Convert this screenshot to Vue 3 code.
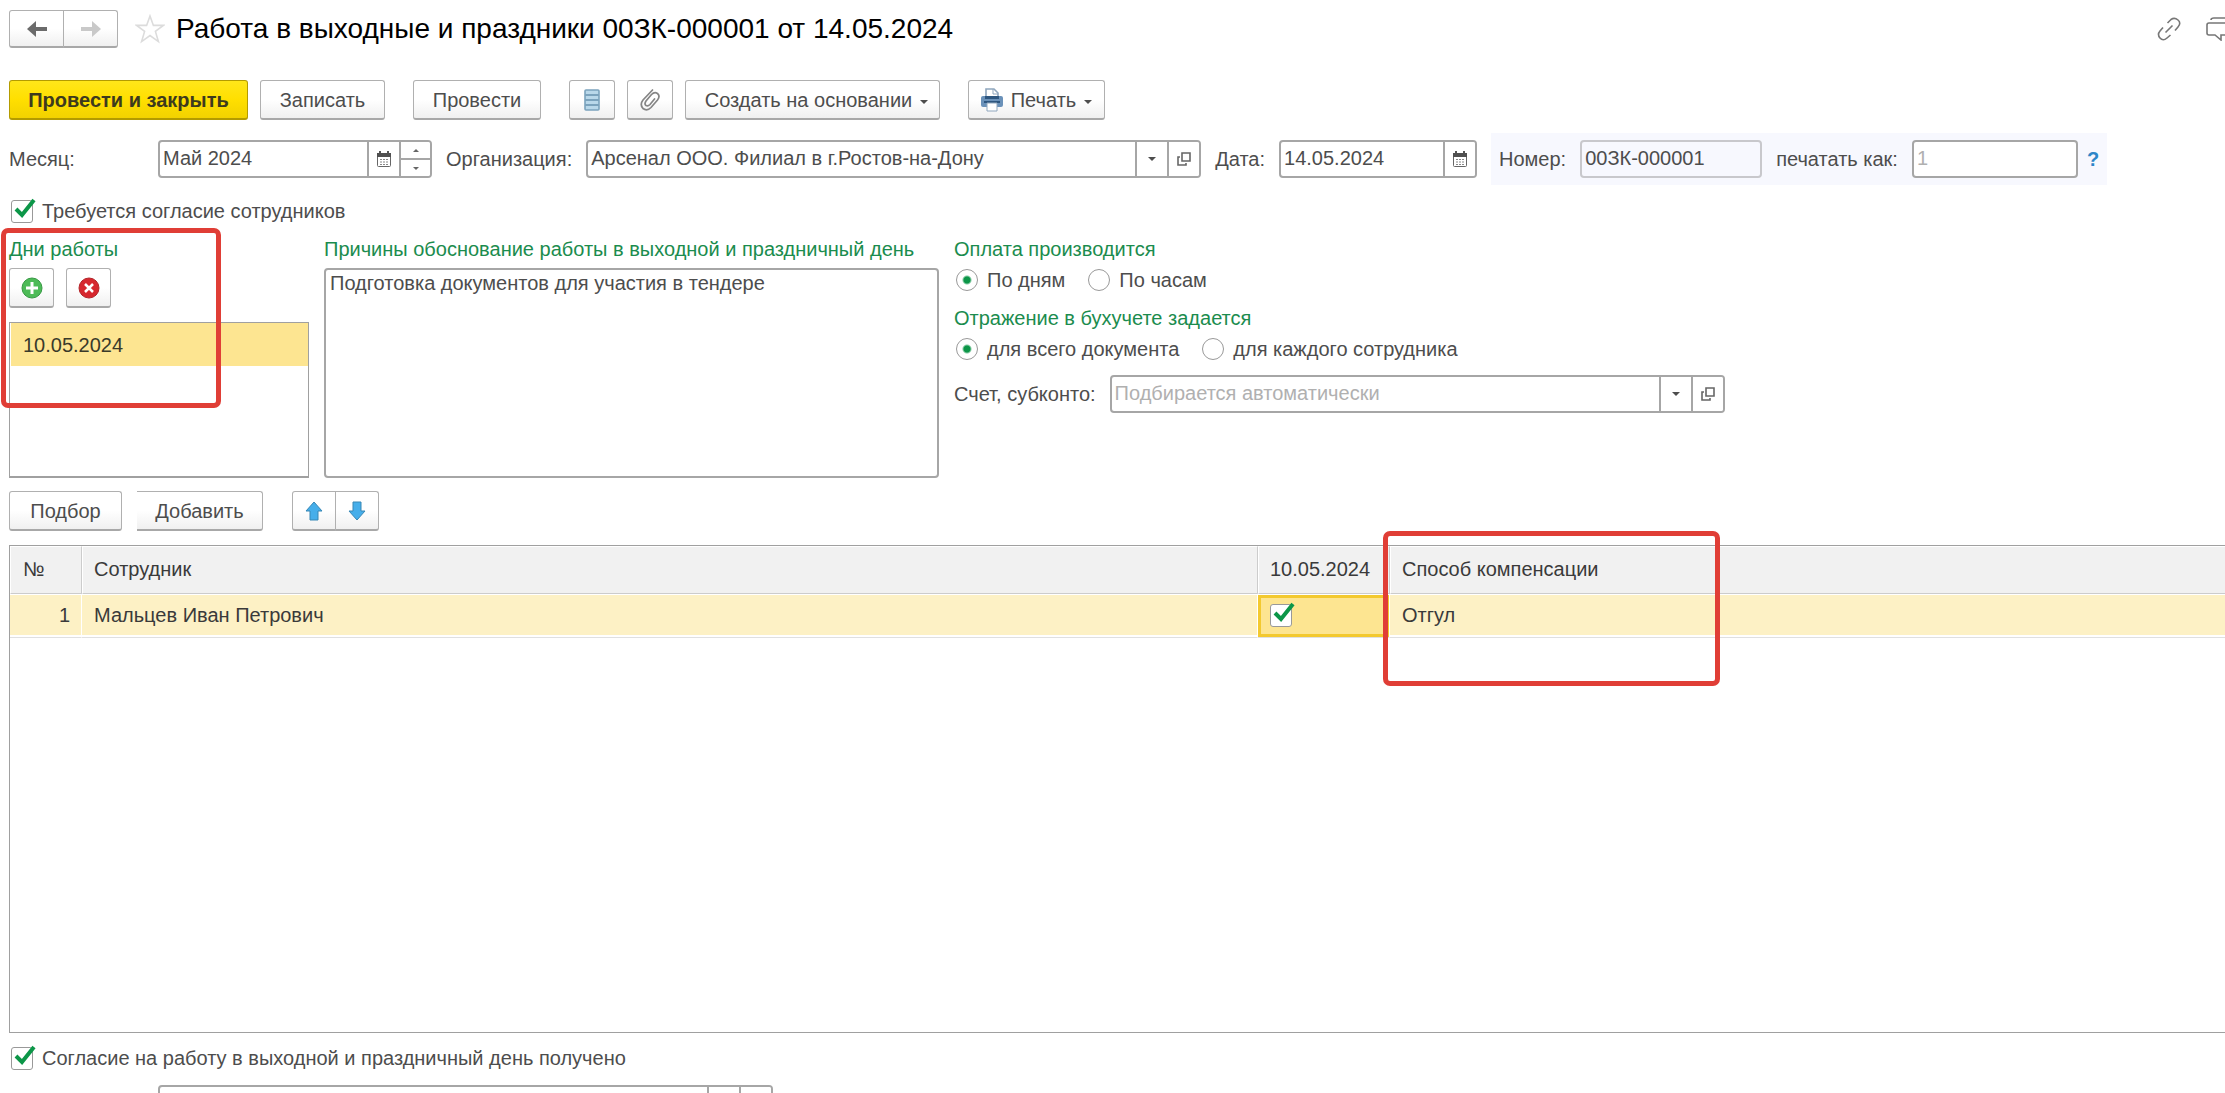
<script setup>
import { ref } from 'vue'

const month = ref('Май 2024')
const org = ref('Арсенал ООО. Филиал в г.Ростов-на-Дону')
const date = ref('14.05.2024')
const number = ref('00ЗК-000001')
const printAs = ref('')
const needConsent = ref(true)
const gotConsent = ref(true)
const payment = ref('days')
const posting = ref('document')
const reason = ref('Подготовка документов для участия в тендере')
const account = ref('')
const responsible = ref('')
const days = ['10.05.2024']
const employees = ref([
  { id: 1, name: 'Мальцев Иван Петрович', works: true, compensation: 'Отгул' },
])
</script>

<template>
  <main class="page">
    <header class="titlebar">
      <div class="pair">
        <button class="btn nav" type="button" aria-label="Назад">
          <svg width="22" height="18" viewBox="0 0 22 18"><path d="M1 9 10 1V7H21V11H10V17Z" fill="#6b6b6b" /></svg>
        </button>
        <button class="btn nav" type="button" aria-label="Вперед">
          <svg width="22" height="18" viewBox="0 0 22 18"><path d="M21 9 12 1V7H1V11H12V17Z" fill="#c9c9c9" /></svg>
        </button>
      </div>
      <svg class="star" width="30" height="30" viewBox="0 0 30 30">
        <path d="M15 2 18.4 11.4H28.4L20.4 17.4 23.4 27.6 15 21.6 6.6 27.6 9.6 17.4 1.6 11.4H11.6Z" fill="#fff" stroke="#dcdcdc" stroke-width="1.6" />
      </svg>
      <h1>Работа в выходные и праздники 00ЗК-000001 от 14.05.2024</h1>
      <div class="tools">
        <svg width="24" height="24" viewBox="0 0 24 24" fill="none" stroke="#777" stroke-width="1.6">
          <path d="M8.500 15.500 15.500 8.500M10.500 6 14 2.500Q17.500 0 21 3T21 10L18 13.500M6 10.500 3 14Q0 17.500 3 21T10 21L13.500 18" />
        </svg>
        <svg width="34" height="24" viewBox="0 0 34 24" fill="none" stroke="#777" stroke-width="1.6">
          <path d="M5 3Q5 1 8 1H30M1 8Q1 6 3 6H25V18H15V23L9 18H3Q1 18 1 16Z" />
        </svg>
      </div>
    </header>

    <div class="commands">
      <button class="btn primary" type="button">Провести и закрыть</button>
      <button class="btn w-save" type="button">Записать</button>
      <button class="btn w-post apart" type="button">Провести</button>
      <button class="btn icon apart" type="button" aria-label="Движения документа">
        <svg width="16" height="22" viewBox="0 0 16 22">
          <rect x="1" y="1" width="14" height="20" rx="1" fill="#b9d8ea" stroke="#7ba3bd" stroke-width="1.6" />
          <path d="M1 6H15M1 11H15M1 16H15" stroke="#7ba3bd" stroke-width="2" />
        </svg>
      </button>
      <button class="btn icon" type="button" aria-label="Присоединенные файлы">
        <svg width="20" height="22" viewBox="0 0 20 22" fill="none" stroke="#858585" stroke-width="1.7" stroke-linecap="round">
          <path d="M12.500 1 3 11Q-.5 15.500 3 19.500 7 22.500 11 18.500L17.500 11Q20.500 7 17.500 4.500 14.500 2.500 11.500 5.500L6 12Q4 15 6 16.500 8 17.500 10 15.500L14.500 10" />
        </svg>
      </button>
      <button class="btn w-create" type="button">Создать на основании <i class="caret"></i></button>
      <button class="btn w-print apart" type="button">
        <svg width="22" height="24" viewBox="0 0 22 24">
          <path d="M5 10V1H13L17 5V10" fill="#fff" stroke="#8fa6bd" stroke-width="1.6" />
          <path d="M12 1V6H17" fill="none" stroke="#8fa6bd" />
          <rect x="0" y="8" width="22" height="11" rx="2" fill="#6a91b9" />
          <rect x="4" y="8" width="14" height="3" fill="#2e567f" />
          <rect x="3" y="13" width="16" height="2" fill="#2e567f" />
          <path d="M6 15H16V23H6Z" fill="#fff" stroke="#8fa6bd" />
        </svg>
        Печать <i class="caret"></i>
      </button>
    </div>

    <div class="requisites">
      <label class="month-label" for="month">Месяц:</label>
      <div class="field month">
        <input id="month" v-model="month" type="text" />
        <button class="part" type="button" aria-label="Выбрать месяц">
          <svg width="14" height="16" viewBox="0 0 14 16"><path d="M3 0V3M11 0V3" stroke="#555" stroke-width="2" /><rect x=".5" y="2.500" width="13" height="13" rx="1" fill="#fff" stroke="#666" /><path d="M0 2H14V6H0Z" fill="#505050" /><path d="M3 8.500H12M3 11H12M3 13.500H12" stroke="#888" stroke-dasharray="2 1" /></svg>
        </button>
        <div class="spin">
          <button type="button" aria-label="Следующий месяц"><i class="tri up"></i></button>
          <button type="button" aria-label="Предыдущий месяц"><i class="tri"></i></button>
        </div>
      </div>
      <label for="org">Организация:</label>
      <div class="field wide">
        <input id="org" v-model="org" type="text" />
        <button class="part" type="button" aria-label="Выбрать"><i class="arrow"></i></button>
        <button class="part" type="button" aria-label="Открыть">
          <svg width="14" height="14" viewBox="0 0 14 14" fill="none" stroke="#666" stroke-width="1.6"><path d="M5 1H13V9H5ZM3 5H1V13H9V11" /></svg>
        </button>
      </div>
      <label for="date">Дата:</label>
      <div class="field date">
        <input id="date" v-model="date" type="text" />
        <button class="part" type="button" aria-label="Выбрать дату">
          <svg width="14" height="16" viewBox="0 0 14 16"><path d="M3 0V3M11 0V3" stroke="#555" stroke-width="2" /><rect x=".5" y="2.500" width="13" height="13" rx="1" fill="#fff" stroke="#666" /><path d="M0 2H14V6H0Z" fill="#505050" /><path d="M3 8.500H12M3 11H12M3 13.500H12" stroke="#888" stroke-dasharray="2 1" /></svg>
        </button>
      </div>
      <div class="number-panel">
        <label for="number">Номер:</label>
        <div class="field number locked"><input id="number" v-model="number" type="text" readonly /></div>
        <label for="print-as">печатать как:</label>
        <div class="field print-as"><input id="print-as" v-model="printAs" type="text" placeholder="1" /></div>
        <a class="help" href="#help">?</a>
      </div>
    </div>

    <label class="check consent">
      <span class="box"><input v-model="needConsent" type="checkbox" /><svg v-if="needConsent" viewBox="0 0 24 24"><path d="M4 11 10 17 22 2" /></svg></span>
      Требуется согласие сотрудников
    </label>

    <div class="details">
      <section class="days">
        <h2>Дни работы</h2>
        <div class="day-buttons">
          <button class="btn icon" type="button" aria-label="Добавить день">
            <svg width="22" height="22" viewBox="0 0 22 22"><circle cx="11" cy="11" r="10" fill="#4dbb57" stroke="#369943" stroke-width="1" /><path d="M11 5V17M5 11H17" stroke="#fff" stroke-width="3" /></svg>
          </button>
          <button class="btn icon" type="button" aria-label="Удалить день">
            <svg width="22" height="22" viewBox="0 0 22 22"><circle cx="11" cy="11" r="10" fill="#d6272e" stroke="#b3252a" stroke-width="1" /><path d="M7 7 15 15M15 7 7 15" stroke="#fff" stroke-width="2.500" /></svg>
          </button>
        </div>
        <ul class="day-list"><li v-for="d in days" :key="d">{{ d }}</li></ul>
        <div class="mark mark-days"></div>
      </section>

      <section class="reason">
        <h2><label for="reason">Причины обоснование работы в выходной и праздничный день</label></h2>
        <textarea id="reason" v-model="reason"></textarea>
      </section>

      <section class="options">
        <h2>Оплата производится</h2>
        <div class="radios">
          <label><input v-model="payment" type="radio" name="payment" value="days" />По дням</label>
          <label><input v-model="payment" type="radio" name="payment" value="hours" />По часам</label>
        </div>
        <h2>Отражение в бухучете задается</h2>
        <div class="radios">
          <label><input v-model="posting" type="radio" name="posting" value="document" />для всего документа</label>
          <label><input v-model="posting" type="radio" name="posting" value="employee" />для каждого сотрудника</label>
        </div>
        <div class="account">
          <label for="account">Счет, субконто:</label>
          <div class="field wide">
            <input id="account" v-model="account" type="text" placeholder="Подбирается автоматически" />
            <button class="part" type="button" aria-label="Выбрать счет"><i class="arrow"></i></button>
            <button class="part" type="button" aria-label="Открыть счет">
              <svg width="14" height="14" viewBox="0 0 14 14" fill="none" stroke="#666" stroke-width="1.6"><path d="M5 1H13V9H5ZM3 5H1V13H9V11" /></svg>
            </button>
          </div>
        </div>
      </section>
    </div>

    <div class="table-commands">
      <button class="btn w-pick" type="button">Подбор</button>
      <button class="btn w-add" type="button">Добавить</button>
      <div class="pair">
        <button class="btn icon" type="button" aria-label="Вверх">
          <svg width="18" height="20" viewBox="0 0 18 20"><path d="M9 1 17 10H13V19H5V10H1Z" fill="#46aeea" stroke="#3787b5" stroke-width="1" /></svg>
        </button>
        <button class="btn icon" type="button" aria-label="Вниз">
          <svg width="18" height="20" viewBox="0 0 18 20"><path d="M9 19 17 10H13V1H5V10H1Z" fill="#46aeea" stroke="#3787b5" stroke-width="1" /></svg>
        </button>
      </div>
    </div>

    <div class="table-frame">
      <table>
        <colgroup><col class="c-num" /><col class="c-name" /><col class="c-day" /><col /></colgroup>
        <thead>
          <tr><th>№</th><th>Сотрудник</th><th>10.05.2024</th><th>Способ компенсации</th></tr>
        </thead>
        <tbody>
          <tr v-for="e in employees" :key="e.id">
            <td class="num">{{ e.id }}</td>
            <td>{{ e.name }}</td>
            <td class="active">
              <span class="box"><input v-model="e.works" type="checkbox" aria-label="Работает 10.05.2024" /><svg v-if="e.works" viewBox="0 0 24 24"><path d="M4 11 10 17 22 2" /></svg></span>
            </td>
            <td>{{ e.compensation }}</td>
          </tr>
        </tbody>
      </table>
      <div class="mark mark-comp"></div>
    </div>

    <label class="check received">
      <span class="box"><input v-model="gotConsent" type="checkbox" /><svg v-if="gotConsent" viewBox="0 0 24 24"><path d="M4 11 10 17 22 2" /></svg></span>
      Согласие на работу в выходной и праздничный день получено
    </label>

    <div class="footer-row">
      <div class="field wide">
        <input v-model="responsible" type="text" aria-label="Ответственный" />
        <button class="part" type="button" aria-label="Выбрать ответственного"></button>
        <button class="part" type="button" aria-label="Открыть ответственного"></button>
      </div>
    </div>
  </main>
</template>

<style>
body {
  margin: 0;
  overflow: hidden;
  background: #fff;
}
</style>

<style scoped>
.page,
.page * {
  box-sizing: border-box;
}
.page {
  display: flex;
  flex-direction: column;
  height: calc(100vh + 30px);
  padding-left: 9px;
  overflow: hidden;
  font: 20px/24px "Liberation Sans", Arial, sans-serif;
  color: #4d4d4d;
}
button,
input,
textarea {
  margin: 0;
  font: inherit;
  color: inherit;
}
h1,
h2 {
  margin: 0;
  font-weight: 400;
}
h1 {
  font-size: 28px;
  line-height: 34px;
  color: #000;
  white-space: nowrap;
}
h2 {
  font-size: 20px;
  line-height: 24px;
  color: #1b8c4e;
  white-space: nowrap;
}
label {
  white-space: nowrap;
}
svg {
  display: block;
  flex: none;
}

.titlebar {
  display: flex;
  align-items: center;
  height: 38px;
  margin-top: 10px;
}
.pair {
  display: flex;
}
.pair .btn:first-child {
  border-radius: 3px 0 0 3px;
}
.pair .btn:last-child {
  margin-left: -1px;
  border-radius: 0 3px 3px 0;
}
.star {
  margin: 0 11px 0 17px;
}
.tools {
  display: flex;
  gap: 25px;
  margin-left: auto;
  margin-right: -15px;
}

.btn {
  display: flex;
  flex: none;
  align-items: center;
  justify-content: center;
  gap: 8px;
  height: 40px;
  padding: 0;
  border: 1px solid #b0b0b0;
  border-bottom: 2px solid #a8a8a8;
  border-radius: 3px;
  background: linear-gradient(#fff 50%, #f0f0f0);
  white-space: nowrap;
}
.btn.nav {
  width: 55px;
  height: 38px;
}
.btn.icon {
  width: 45px;
}
.btn.primary {
  width: 239px;
  border-color: #b39b00;
  background: linear-gradient(#ffe61a, #ffdf00 50%, #f2d200);
  color: #3d3a1e;
  font-weight: 700;
}
.btn.w-create {
  width: 255px;
  padding-left: 8px;
}
.w-save { width: 125px; }
.w-post { width: 128px; }
.w-print { width: 137px; }
.w-pick { width: 113px; }
.w-add { width: 126px; }

.caret,
.arrow {
  width: 0;
  height: 0;
  border: 4px solid transparent;
  border-top: 4px solid #4d4d4d;
  border-bottom: 0;
}
.caret {
  margin-top: 4px;
}
.tri {
  width: 0;
  height: 0;
  border: 3px solid transparent;
  border-top: 3px solid #666;
  border-bottom: 0;
}
.tri.up {
  border-top: 0;
  border-bottom: 3px solid #666;
}

.commands {
  display: flex;
  gap: 12px;
  margin-top: 32px;
}
.commands .btn.icon {
  width: 46px;
}
.commands .apart {
  margin-left: 16px;
}

.requisites {
  display: flex;
  align-items: center;
  gap: 14px;
  height: 52px;
  margin-top: 13px;
}
.month-label {
  width: 135px;
}
.field {
  display: flex;
  flex: none;
  height: 38px;
  border: 2px solid #a6a6a6;
  border-radius: 4px;
  background: #fff;
  overflow: hidden;
}
.field input {
  flex: 1;
  min-width: 0;
  padding: 0 3px 2px;
  border: 0;
  outline: 0;
  background: transparent;
}
.field input::placeholder {
  color: #b0b0b0;
  opacity: 1;
}
.field.month { width: 274px; }
.field.wide { width: 615px; }
.field.date { width: 198px; }
.field.number { width: 182px; }
.field.print-as { width: 166px; }
.field.locked {
  border-color: #c8c8cc;
  background: #f7f8fe;
}
.part {
  display: flex;
  flex: none;
  align-items: center;
  justify-content: center;
  width: 32px;
  padding: 0;
  border: 0;
  border-left: 2px solid #a6a6a6;
  background: #fff;
}
.spin {
  display: flex;
  flex-direction: column;
  width: 31px;
  border-left: 2px solid #a6a6a6;
}
.spin button {
  display: flex;
  flex: 1;
  align-items: center;
  justify-content: center;
  padding: 0;
  border: 0;
  background: #fff;
}
.spin button + button {
  border-top: 2px solid #a6a6a6;
}
.number-panel {
  display: flex;
  align-items: center;
  gap: 14px;
  height: 52px;
  padding: 0 8px;
  background: #f7f8fe;
}
.help {
  margin-left: -5px;
  color: #2e86c8;
  font-weight: 700;
  text-decoration: none;
}

.check {
  display: flex;
  align-items: center;
  align-self: flex-start;
  gap: 9px;
  height: 24px;
  padding-left: 2px;
}
.consent {
  margin-top: 14px;
}
.box {
  position: relative;
  display: block;
  width: 22px;
  height: 23px;
}
.box input {
  display: block;
  width: 22px;
  height: 23px;
  appearance: none;
  border: 1px solid #999;
  border-radius: 3px;
  background: #fff;
}
.box svg {
  position: absolute;
  top: -2px;
  left: 1px;
  width: 24px;
  height: 24px;
  fill: none;
  stroke: #0c9648;
  stroke-width: 4;
}

.details {
  display: flex;
  gap: 15px;
  height: 241px;
  margin-top: 14px;
}
.days {
  position: relative;
  display: flex;
  flex-direction: column;
  width: 300px;
}
.day-buttons {
  display: flex;
  gap: 12px;
  margin-top: 7px;
}
.day-list {
  flex: 1;
  margin: 14px 0 0;
  padding: 0 0 0 1px;
  border: 1px solid #a0a0a0;
  border-bottom-width: 2px;
  list-style: none;
}
.day-list li {
  height: 43px;
  padding-left: 12px;
  background: #fde591;
  color: #3a3a2a;
  line-height: 44px;
}
.reason {
  display: flex;
  flex-direction: column;
  width: 615px;
}
.reason textarea {
  flex: 1;
  margin-top: 7px;
  padding: 1px 4px;
  border: 2px solid #a6a6a6;
  border-radius: 4px;
  outline: 0;
  resize: none;
}
.radios {
  display: flex;
  gap: 21px;
  height: 24px;
  margin: 7px 0 14px;
}
.radios label {
  display: flex;
  align-items: center;
  gap: 9px;
}
.radios input {
  width: 22px;
  height: 22px;
  margin-left: 2px;
  appearance: none;
  border: 1px solid #999;
  border-radius: 50%;
  background: #fff;
}
.radios input:checked {
  background: radial-gradient(circle, #0c9648 3px, #fff 5px);
}
.account {
  display: flex;
  align-items: center;
  gap: 14px;
}

.table-commands {
  display: flex;
  margin-top: 13px;
}
.w-add {
  margin-left: 15px;
  border-left: 0;
  border-radius: 0 3px 3px 0;
}
.table-commands .pair {
  margin-left: 29px;
}
.table-commands .pair .btn {
  width: 44px;
}

.table-frame {
  position: relative;
  flex: 1;
  margin-top: 14px;
  border: 1px solid #a0a0a0;
  border-right: 0;
}
table {
  width: 100%;
  table-layout: fixed;
  border-collapse: separate;
  border-spacing: 0;
  color: #3a3a3a;
}
.c-num { width: 72px; }
.c-name { width: 1176px; }
.c-day { width: 132px; }
th,
td {
  padding: 0 11px 2px;
  text-align: left;
  font-weight: 400;
}
th {
  height: 48px;
  border: 1px solid #fff;
  border-right: 1px solid #ccc;
  border-bottom: 1px solid #ccc;
  background: #f1f1f1;
}
th:first-child {
  padding-left: 12px;
}
th:last-child {
  border-right: 0;
}
td {
  height: 44px;
  padding-left: 12px;
  border-top: 1px solid #fff;
  border-right: 1px solid #fff;
  border-bottom: 1px solid #e0e0e0;
  background: #fdf1c5;
  box-shadow: inset 0 -2px #fff;
}
td:last-child {
  border-right: 0;
}
td.num {
  text-align: right;
}
td.active {
  background: #fde591;
  box-shadow: inset 0 0 0 3px #f3c92f;
}

.mark {
  position: absolute;
  border: 5px solid #e03e36;
  border-radius: 7px;
  pointer-events: none;
}
.mark-days {
  top: -9px;
  left: -8px;
  width: 220px;
  height: 180px;
}
.mark-comp {
  top: -15px;
  left: 1373px;
  width: 337px;
  height: 155px;
}

.received {
  flex: none;
  margin-top: 13px;
}
.footer-row {
  flex: none;
  height: 38px;
  margin: 15px 0 0 149px;
}
</style>
